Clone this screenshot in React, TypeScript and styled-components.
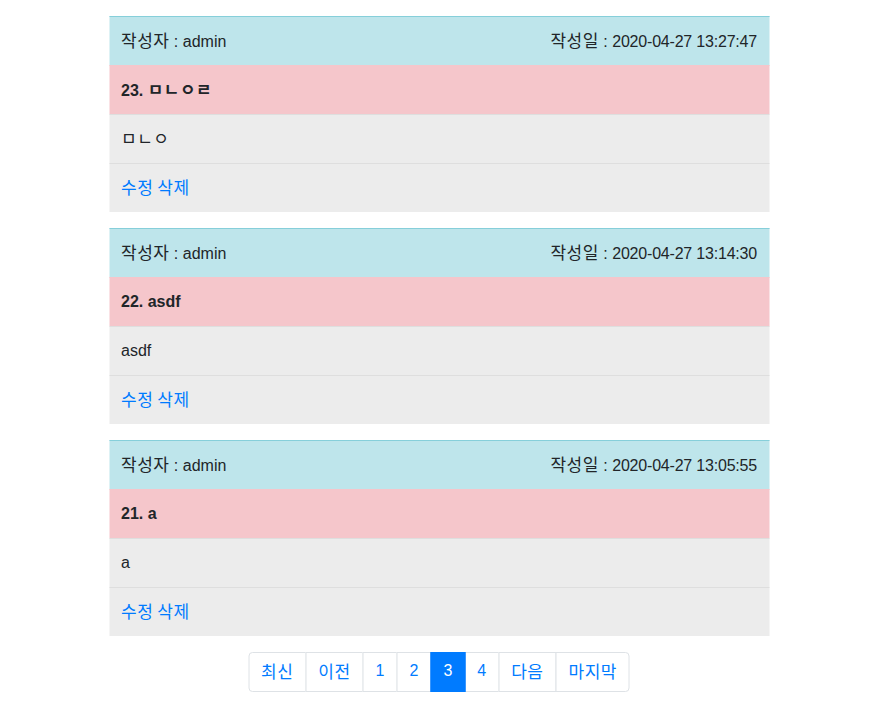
import React from "react";
import styled, { createGlobalStyle } from "styled-components";

const GlobalStyle = createGlobalStyle`
  html, body {
    margin: 0;
    padding: 0;
    background: #ffffff;
  }
  body {
    font-family: "Liberation Sans", "Noto Sans CJK KR", sans-serif;
    font-size: 16px;
    line-height: 24px;
    color: #212529;
  }
`;

const Page = styled.div`
  width: 660px;
  margin: 0 auto;
  padding-top: 16px;
  transform: translateX(-0.5px);
`;

const Card = styled.div`
  display: flex;
  flex-direction: column;
  margin-bottom: 16px;
`;

type Tone = "info" | "danger" | "plain";

const bg: Record<Tone, string> = {
  info: "#bee5eb",
  danger: "#f5c6cb",
  plain: "#ececec",
};
const border: Record<Tone, string> = {
  info: "#86cfda",
  danger: "#f5c6cb",
  plain: "#dedede",
};

const Row = styled.div<{ $tone: Tone; $bold?: boolean }>`
  display: flex;
  justify-content: space-between;
  align-items: center;
  padding: 12px;
  height: 24px;
  border-top: 1px solid ${(p) => border[p.$tone]};
  background: ${(p) => bg[p.$tone]};
  font-weight: ${(p) => (p.$bold ? 700 : 400)};
`;

const Ko = styled.span`
  font-family: "Noto Sans CJK KR", sans-serif;
  font-size: 17px;
  letter-spacing: 0.5px;
`;

const DateText = styled.span`
  letter-spacing: -0.2px;
`;

const Link = styled.a`
  color: #007bff;
  text-decoration: none;
  cursor: pointer;
  & + & {
    margin-left: 4px;
  }
`;

const Pagination = styled.ul`
  display: flex;
  justify-content: center;
  list-style: none;
  margin: 1px 0 16px;
  padding: 0;
`;

const PageItem = styled.li<{ $active?: boolean; $first?: boolean; $last?: boolean }>`
  display: block;
  padding: 7px 12px;
  line-height: 22px;
  border: 1px solid ${(p) => (p.$active ? "#007bff" : "#dee2e6")};
  margin-left: ${(p) => (p.$first ? "0" : "-1px")};
  color: ${(p) => (p.$active ? "#ffffff" : "#007bff")};
  background: ${(p) => (p.$active ? "#007bff" : "#ffffff")};
  position: relative;
  z-index: ${(p) => (p.$active ? 1 : 0)};
  border-radius: ${(p) =>
    p.$first ? "4px 0 0 4px" : p.$last ? "0 4px 4px 0" : "0"};
  cursor: pointer;
`;

const posts = [
  { id: 23, title: "ㅁㄴㅇㄹ", body: "ㅁㄴㅇ", date: "2020-04-27 13:27:47" },
  { id: 22, title: "asdf", body: "asdf", date: "2020-04-27 13:14:30" },
  { id: 21, title: "a", body: "a", date: "2020-04-27 13:05:55" },
];

const pages = ["최신", "이전", "1", "2", "3", "4", "다음", "마지막"];
const isKo = (s: string) => /[\u3130-\u318f\uac00-\ud7a3]/.test(s);

export default function App() {
  return (
    <>
      <GlobalStyle />
      <Page>
        {posts.map((p) => (
          <Card key={p.id}>
            <Row $tone="info">
              <span>
                <Ko>작성자</Ko> : admin
              </span>
              <span>
                <Ko>작성일</Ko> : <DateText>{p.date}</DateText>
              </span>
            </Row>
            <Row $tone="danger" $bold>
              <span>
                {p.id}. {isKo(p.title) ? <Ko>{p.title}</Ko> : p.title}
              </span>
            </Row>
            <Row $tone="plain">
              <span>{isKo(p.body) ? <Ko>{p.body}</Ko> : p.body}</span>
            </Row>
            <Row $tone="plain">
              <span>
                <Link>
                  <Ko>수정</Ko>
                </Link>
                <Link>
                  <Ko>삭제</Ko>
                </Link>
              </span>
            </Row>
          </Card>
        ))}
        <Pagination>
          {pages.map((label, i) => (
            <PageItem
              key={label}
              $active={label === "3"}
              $first={i === 0}
              $last={i === pages.length - 1}
            >
              {isKo(label) ? <Ko>{label}</Ko> : label}
            </PageItem>
          ))}
        </Pagination>
      </Page>
    </>
  );
}
